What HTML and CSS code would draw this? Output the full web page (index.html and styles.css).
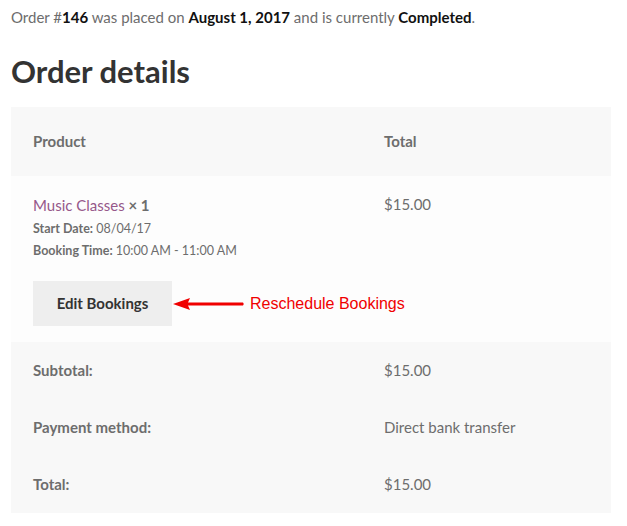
FILE: index.html
```html
<!DOCTYPE html>
<html>
<head>
<meta charset="utf-8">
<link rel="stylesheet" href="styles.css">
</head>
<body>
<div class="page">
  <p class="notice">Order #<mark>146</mark> was placed on <mark>August 1, 2017</mark> and is currently <mark>Completed</mark>.</p>
  <h2 class="title">Order details</h2>
  <table class="order">
    <colgroup><col class="c1"><col class="c2"></colgroup>
    <thead>
      <tr><th>Product</th><th>Total</th></tr>
    </thead>
    <tbody>
      <tr>
        <td>
          <div class="pname"><a href="#">Music Classes</a> <strong>× 1</strong></div>
          <div class="meta"><strong>Start Date:</strong> 08/04/17</div>
          <div class="meta"><strong>Booking Time:</strong> 10:00 AM - 11:00 AM</div>
          <div class="actions">
            <a class="btn" href="#">Edit Bookings</a>
            <svg class="arrow" width="72" height="14" viewBox="0 0 72 14"><path d="M0 7 L17 1 L15 5.5 L70 5.5 Q71.6 7 70 8.5 L15 8.5 L17 13 Z" fill="#f00000"/></svg>
            <span class="note">Reschedule Bookings</span>
          </div>
        </td>
        <td class="price">$15.00</td>
      </tr>
    </tbody>
    <tfoot>
      <tr><th>Subtotal:</th><td>$15.00</td></tr>
      <tr><th>Payment method:</th><td>Direct bank transfer</td></tr>
      <tr><th>Total:</th><td>$15.00</td></tr>
    </tfoot>
  </table>
</div>
</body>
</html>
```
FILE: styles.css
```css
html, body {
  margin: 0;
  padding: 0;
  background: #ffffff;
}
body {
  font-family: Lato, "Open Sans", sans-serif;
  font-size: 15px;
  color: #6d6d6d;
}
.page {
  padding: 4px 0 0 11px;
  width: 600px;
}
.notice {
  margin: 0;
  line-height: 26px;
}
.notice mark {
  background: transparent;
  color: #111111;
  font-weight: 700;
}
.title {
  margin: 21px 0 16px;
  font-size: 31px;
  line-height: 40px;
  font-weight: 700;
  color: #333333;
}
.order {
  width: 600px;
  border-collapse: collapse;
  table-layout: fixed;
}
.c1 { width: 351px; }
.c2 { width: 249px; }
.order th, .order td {
  text-align: left;
  vertical-align: top;
  padding: 16px 22px;
  line-height: 25px;
}
.order thead th {
  background: #f8f8f8;
  padding: 22px 22px;
  font-weight: 700;
}
.order tbody td {
  background: #fdfdfd;
}
.order tfoot th, .order tfoot td {
  background: #f8f8f8;
}
.order tfoot th {
  font-weight: 700;
}
.pname {
  line-height: 26px;
}
.pname a {
  color: #96588a;
  text-decoration: none;
}
.pname strong {
  font-weight: 700;
}
.meta {
  font-size: 12.5px;
  line-height: 22px;
}
.meta strong {
  font-weight: 700;
}
.actions {
  display: flex;
  align-items: center;
  margin-top: 19px;
}
.btn {
  display: block;
  flex-shrink: 0;
  white-space: nowrap;
  background: #eeeeee;
  color: #333333;
  font-weight: 700;
  text-decoration: none;
  width: 139px;
  box-sizing: border-box;
  text-align: center;
  padding: 10px 0;
  line-height: 25px;
}
.arrow {
  display: block;
  flex-shrink: 0;
  margin-left: 1px;
}
.note {
  margin-left: 5px;
  font-family: "Liberation Sans", Arial, sans-serif;
  font-size: 16px;
  color: #f00000;
  white-space: nowrap;
}
```
